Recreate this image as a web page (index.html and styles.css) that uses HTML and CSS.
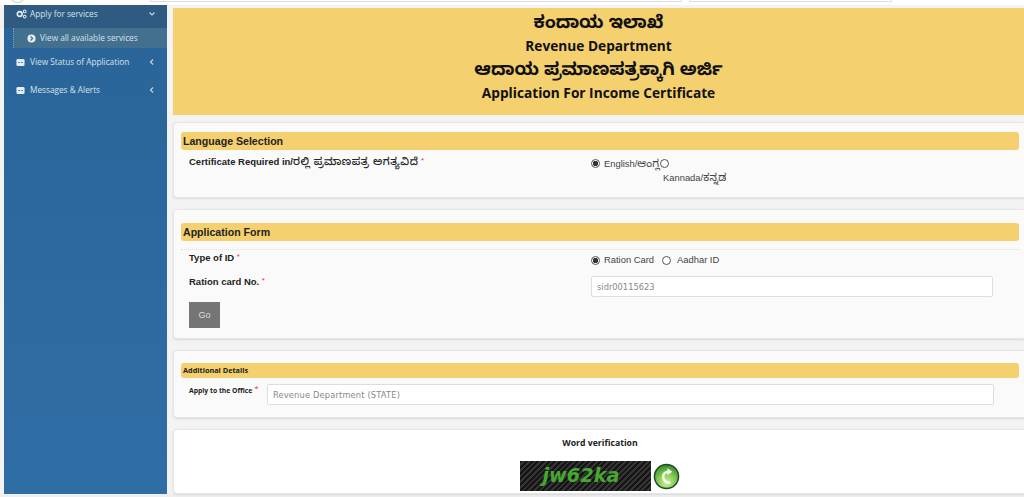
FILE: index.html
```html
<!DOCTYPE html>
<html lang="en">
<head>
<meta charset="utf-8">
<title>Application For Income Certificate</title>
<link rel="stylesheet" href="styles.css">
</head>
<body>
<div class="topstrip"><span class="top-circle"></span><span class="top-field"></span><span class="top-field short"></span></div>
<div class="shell">
  <aside class="sidebar">
    <div class="nav-item open">
      <svg class="nav-icon gear" viewBox="0 0 12 10" width="11" height="10"><circle cx="4" cy="5" r="2.6" fill="none" stroke="#e4edf4" stroke-width="1.8"/><circle cx="9.5" cy="2.2" r="1.5" fill="none" stroke="#e4edf4" stroke-width="1.1"/><circle cx="9.5" cy="7.8" r="1.5" fill="none" stroke="#e4edf4" stroke-width="1.1"/></svg>
      <span class="nav-label">Apply for services</span>
      <svg class="chev" viewBox="0 0 8 8" width="8" height="8"><path d="M1.5 2.5 4 5l2.5-2.5" fill="none" stroke="#c5d5e2" stroke-width="1.2"/></svg>
    </div>
    <div class="nav-sub">
      <svg class="sub-icon" viewBox="0 0 10 10" width="9" height="9"><circle cx="5" cy="5" r="4.5" fill="#e4edf4"/><path d="M4 2.8 6.2 5 4 7.2" fill="none" stroke="#44708f" stroke-width="1.4"/></svg>
      <span>View all available services</span>
    </div>
    <div class="nav-item">
      <svg class="nav-icon" viewBox="0 0 10 10" width="9" height="9"><rect x=".5" y="1" width="9" height="8" rx="1.5" fill="#e4edf4"/><path d="M2.6 5h1.6M5.8 5h1.6" stroke="#2f6a9f" stroke-width="1.3"/></svg>
      <span class="nav-label">View Status of Application</span>
      <svg class="chev" viewBox="0 0 8 8" width="8" height="8"><path d="M5 1.5 2.5 4 5 6.500" fill="none" stroke="#c5d5e2" stroke-width="1.2"/></svg>
    </div>
    <div class="nav-item">
      <svg class="nav-icon" viewBox="0 0 10 10" width="9" height="9"><rect x=".5" y="1" width="9" height="8" rx="1.5" fill="#e4edf4"/><path d="M2.6 5h1.6M5.8 5h1.6" stroke="#2f6a9f" stroke-width="1.3"/></svg>
      <span class="nav-label">Messages &amp; Alerts</span>
      <svg class="chev" viewBox="0 0 8 8" width="8" height="8"><path d="M5 1.5 2.5 4 5 6.500" fill="none" stroke="#c5d5e2" stroke-width="1.2"/></svg>
    </div>
  </aside>
  <main class="content">
    <header class="banner">
      <div class="b-kn">ಕಂದಾಯ ಇಲಾಖೆ</div>
      <div class="b-en">Revenue Department</div>
      <div class="b-kn">ಆದಾಯ ಪ್ರಮಾಣಪತ್ರಕ್ಕಾಗಿ ಅರ್ಜಿ</div>
      <div class="b-en">Application For Income Certificate</div>
    </header>
    <section class="card lang">
      <h2 class="bar">Language Selection</h2>
      <div class="row">
        <div class="label">Certificate Required in/<span class="kn">ರಲ್ಲಿ ಪ್ರಮಾಣಪತ್ರ ಅಗತ್ಯವಿದೆ</span> <i>*</i></div>
        <div class="value lang-options">
          <span class="radio on"></span><span class="opt">English/<span class="kn">ಆಂಗ್ಲ</span></span><span class="radio last"></span>
          <span class="opt kn-line">Kannada/<span class="kn">ಕನ್ನಡ</span></span>
        </div>
      </div>
    </section>
    <section class="card form">
      <h2 class="bar">Application Form</h2>
      <div class="form-body">
        <div class="row r-type">
          <div class="label">Type of ID <i>*</i></div>
          <div class="value"><span class="radio on"></span><span class="opt">Ration Card</span><span class="radio second"></span><span class="opt">Aadhar ID</span></div>
        </div>
        <div class="row r-ration">
          <div class="label">Ration card No. <i>*</i></div>
          <div class="value"><input class="field" value="sidr00115623"></div>
        </div>
        <button class="go">Go</button>
      </div>
    </section>
    <section class="card extra">
      <h3 class="bar small">Additional Details</h3>
      <div class="office">
        <div class="office-label">Apply to the Office <i>*</i></div>
        <input class="field office-field" value="Revenue Department (STATE)">
      </div>
    </section>
    <section class="card verify">
      <div class="v-title">Word verification</div>
      <div class="v-row">
        <div class="captcha">jw62ka</div>
        <svg class="refresh" viewBox="0 0 28 28" width="27" height="27"><defs><radialGradient id="g" cx=".5" cy=".75" r=".75"><stop offset="0" stop-color="#d2f2a0"/><stop offset=".55" stop-color="#7cc24e"/><stop offset="1" stop-color="#2b8a2a"/></radialGradient></defs><circle cx="14" cy="14" r="12.500" fill="url(#g)" stroke="#1d4a26" stroke-width="1.500"/><path d="M18 20.500a6.500 6.500 0 0 1-7.500-6c0-3.500 2.500-5.500 5-5.500" fill="none" stroke="#f5fbe8" stroke-width="2.600"/><path d="M15 5.500l5 3.500-5 3.800z" fill="#f5fbe8"/></svg>
      </div>
    </section>
  </main>
</div>
</body>
</html>
```
FILE: styles.css
```css
* { box-sizing: border-box; }
html, body { margin: 0; height: 497px; overflow: hidden; }
body { background: #efefef; font-family: "Liberation Sans", sans-serif; color: #222; }
.topstrip { height: 5px; background: #fff; display: flex; overflow: hidden; }
.top-circle { width: 17px; height: 17px; border: 1px solid #ccc; border-radius: 50%; margin: -14px 0 0 9px; flex: none; }
.top-field { width: 532px; height: 2px; border: 1px solid #ddd; border-top: 0; margin-left: 124px; flex: none; }
.top-field.short { width: 203px; margin-left: 7px; }
.shell { display: flex; height: 489px; background: #f3f3f3; }
.sidebar { width: 163px; margin-left: 4px; background: linear-gradient(#2a6498, #2f6ea5); color: #d6e2ec; font: 8.250px/1 "Open Sans", sans-serif; flex: none; }
.nav-item { display: flex; align-items: center; padding: 0 11px 0 12px; height: 28px; }
.nav-item.open { height: 23px; background: #2f5b82; padding-bottom: 5px; }
.nav-icon { flex: none; margin-right: 5px; }
.nav-icon.gear { margin-right: 3px; }
.nav-label { flex: 1; }
.nav-item .chev { flex: none; }
.nav-sub { height: 20px; background: #43708f; display: flex; align-items: center; padding-left: 13px; gap: 4px; border-left: 1px dotted #7fa0b8; margin-left: 9px; }
.content { flex: 1; margin-left: 6px; padding-top: 3px; min-width: 0; }
.banner { height: 107px; background: #f4d06f; text-align: center; color: #111; padding-top: 2px; font-weight: 700; }
.b-kn { font-size: 17.700px; line-height: 24px; padding-top: 4px; margin-bottom: -4px; font-family: "Noto Sans Kannada", "Noto Sans", sans-serif; }
.b-en { font-size: 13.700px; line-height: 23px; font-family: "Open Sans", sans-serif; }
.card { background: #fafafa; border: 1px solid #e6e6e6; border-right: 0; border-radius: 4px 0 0 4px; box-shadow: 0 1px 2px #d8d8d8; padding: 0 5px 0 7px; }
.lang { margin-top: 7px; height: 76px; padding-top: 9px; }
.form { margin-top: 11px; height: 130px; padding-top: 13px; }
.extra { margin-top: 11px; height: 68px; padding-top: 12px; }
.verify { margin-top: 11px; height: 65px; background: #fff; padding-top: 7px; text-align: center; }
.bar { margin: 0; background: #f4d06f; color: #222; font-size: 10.600px; line-height: 18px; height: 18px; padding: 0 2px; border-radius: 3px; font-weight: 700; }
.bar.small { font-size: 7.300px; height: 15px; line-height: 15px; font-family: "Open Sans", sans-serif; }
.row { display: flex; font-size: 9.500px; }
.label { width: 410px; padding-left: 8px; font-weight: 700; flex: none; }
.kn { font-family: "Noto Sans Kannada", "Noto Sans", sans-serif; }
.label .kn { font-size: 10.500px; font-weight: 500; letter-spacing: .5px; }
.label i, .office-label i { color: #e33; font-style: normal; font-weight: 400; font-size: 8px; vertical-align: 2px; line-height: 1; }
.value { flex: 1; display: flex; align-items: center; flex-wrap: wrap; color: #444; }
.lang .row { margin-top: 5px; line-height: 14px; }
.lang-options { align-items: flex-start; padding-top: 2px; }
.kn-line { width: 100%; padding-left: 72px; margin-top: -2px; }
.opt { font-size: 9.400px; }
.opt .kn { font-size: 10.500px; letter-spacing: .3px; }
.radio { width: 9px; height: 9px; border: 1px solid #555; border-radius: 50%; background: #fff; margin-right: 4px; flex: none; }
.radio.on { background: radial-gradient(circle, #333 0 2.500px, #fff 3px); }
.radio.second { margin-left: 8px; margin-right: 6px; }
.lang-options .radio { margin-top: 2px; }
.lang-options .radio.last { margin-right: 0; }
.form-body { border-top: 1px dotted #ddd; margin-top: 8px; }
.r-type { margin-top: 1px; height: 18px; line-height: 14px; }
.r-type .label { padding-bottom: 4px; }
.r-ration { margin-top: 7px; height: 21px; }
.go { display: block; margin: 5px 0 0 8px; width: 31px; height: 26px; border: 1px solid #777; background: #757575; color: #ddd; font: 9px "Liberation Sans", sans-serif; }
.field { height: 21px; width: 402px; border: 1px solid #ddd; border-radius: 2px; background: #fff; font: 8.300px "DejaVu Sans", sans-serif; color: #888; padding: 0 5px; }
.office { display: flex; margin-top: 6px; align-items: flex-start; }
.office-label { width: 86px; padding: 0 0 0 8px; font: 700 6.800px/12px "Open Sans", sans-serif; flex: none; white-space: nowrap; }
.office-field { width: 727px; letter-spacing: .15px; }
.v-title { font: 700 8.700px "Open Sans", sans-serif; color: #222; line-height: 12px; }
.v-row { display: flex; justify-content: center; align-items: center; gap: 2px; margin-top: 12px; }
.captcha { width: 131px; height: 30px; padding-right: 9px; background: repeating-linear-gradient(135deg, #141414 0 2px, #343434 2px 4px); color: #46a82f; font: italic 700 19.300px/30px "DejaVu Sans", sans-serif; }
```
